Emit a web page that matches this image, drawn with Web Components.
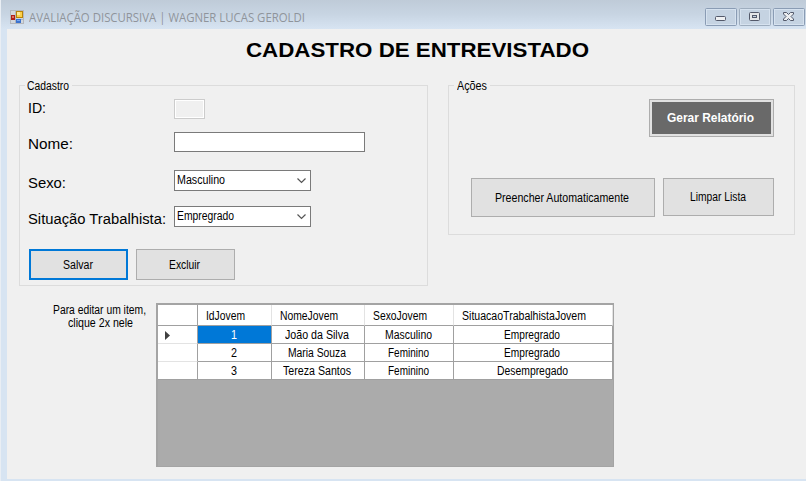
<!DOCTYPE html>
<html lang="pt-BR">
<head>
<meta charset="utf-8">
<title>AVALIAÇÃO DISCURSIVA | WAGNER LUCAS GEROLDI</title>
<style>
html,body{margin:0;height:100%;overflow:hidden}
body{font:12px/13px "Liberation Sans",Arial,sans-serif;color:#000}
</style>
</head>
<body>
<entrevista-app></entrevista-app>
<script>
const define=(name,html,ready)=>customElements.define(name,class extends HTMLElement{
  constructor(){super();this.attachShadow({mode:'open'}).innerHTML=html;}
  connectedCallback(){if(ready)ready.call(this,this.shadowRoot);}
});

// Text run condensed or widened to the pixel width given in "w".
define('fit-text',`<style>
:host{display:block;white-space:nowrap;flex:none}
span{display:inline-block;transform-origin:0 50%}
</style><span><slot></slot></span>`,function(root){
  const w=+this.getAttribute('w'),s=root.querySelector('span');
  this.style.width=w+'px';
  s.style.transform=`scaleX(${w/s.getBoundingClientRect().width})`;
});

define('title-bar',`<style>
:host{display:flex;align-items:flex-start;height:29px;box-sizing:border-box;padding:8px 1px 0 9px;
background:linear-gradient(#bfcbd8,#c8d5e3 50%,#d7e4f2)}
.logo{margin-top:2px;flex:none}
fit-text{margin:1px auto 0 5px;font:12.5px/17px "Open Sans","Noto Sans",sans-serif;color:#8f949b}
.b{display:flex;gap:2px}
.b svg{display:block}
.b rect.f{fill:#c5d3e2;stroke:#8a9cb4}
.b rect.h{fill:none;stroke:#d6e2ef}
</style>
<svg class="logo" width="14" height="14" shape-rendering="crispEdges">
<rect x=".5" y=".5" width="13" height="13" fill="#d2d7dd" stroke="#b4b7bc"/>
<path d="M5.500 1v12M1 9.500h12" stroke="#b4b7bc"/>
<rect x="1" y="5" width="4" height="5" fill="#b02018"/><rect x="2" y="6" width="2" height="2" fill="#e07060"/>
<rect x="6.500" y="1.500" width="6" height="6" fill="#fbd04a" stroke="#b98308"/><rect x="7" y="2" width="3" height="3" fill="#ffe995"/>
<rect x="6" y="9" width="5" height="4" fill="#3b73cf"/><rect x="7" y="10" width="3" height="1" fill="#77a5ee"/></svg>
<fit-text w="276">AVALIAÇÃO DISCURSIVA | WAGNER LUCAS GEROLDI</fit-text>
<div class="b">
<svg width="32" height="18"><rect class="f" x=".5" y=".5" width="31" height="17" rx="1"/><rect class="h" x="1.500" y="1.500" width="29" height="15"/>
<rect x="10.500" y="8.500" width="10" height="4" rx="1" fill="#eef0f2" stroke="#53596a"/></svg>
<svg width="32" height="18"><rect class="f" x=".5" y=".5" width="31" height="17" rx="1" style="stroke:#9eadbe"/><rect class="h" x="1.500" y="1.500" width="29" height="15"/>
<rect x="10.500" y="4.500" width="10" height="8" rx="1" fill="#e4e6e8" stroke="#53596a"/><rect x="13.500" y="7.500" width="4" height="2" fill="#c5d3e2" stroke="#53596a"/></svg>
<svg width="32" height="18"><rect class="f" x=".5" y=".5" width="31" height="17" rx="1"/><rect class="h" x="1.500" y="1.500" width="29" height="15"/>
<path d="M10.500 4.500h3l2 2 2-2h3v1.500l-2.500 2.500 2.500 2.500v1.500h-3l-2-2-2 2h-3v-1.500l2.500-2.500-2.500-2.500z" fill="#eceef0" stroke="#53596a"/></svg>
</div>`);

define('group-box',`<style>
:host{display:block;box-sizing:border-box;border:1px solid #dcdcdc}
.l{display:flex;width:max-content;height:13px;margin:-6px 0 0 5px;padding:0 3px 0 2px;background:#f0f0f0}
</style><div class="l"><slot name="legend"></slot></div><slot></slot>`);

define('form-button',`<style>
:host{display:flex;align-items:center;justify-content:center;box-sizing:border-box;flex:none;
background:#e1e1e1;border:1px solid #adadad;padding:1px 2px 0 0}
:host([default]){border:2px solid #0078d7}
:host([dark]){background:#696969;color:#fff;font-weight:bold;box-shadow:inset 0 0 0 2px #e1e1e1;padding:0 2px 0 0}
</style><slot></slot>`);

define('text-field',`<style>
:host{display:block;box-sizing:border-box;height:20px;background:#fff;border:1px solid #7a7a7a}
:host([disabled]){background:#f0f0f0;border-color:#ccc;box-shadow:inset 0 0 0 1px #fff}
</style>`);

define('combo-box',`<style>
:host{display:flex;box-sizing:border-box;width:137px;height:21px;background:#fff;border:1px solid #7a7a7a;padding:3px 4px 0 2px;justify-content:space-between}
svg{flex:none;margin-top:4px}
</style><slot></slot><svg width="9" height="6"><path d="M.5.5l4 4 4-4" fill="none" stroke="#555" stroke-width="1.200"/></svg>`);

define('form-row',`<style>
:host{display:grid;grid-template-columns:146px auto;justify-content:start;align-items:start;font-size:15.5px;line-height:17px}
::slotted(:not([slot])){font-size:12px;line-height:13px}
</style><slot name="label"></slot><slot></slot>`);

define('data-grid',`<style>
:host{display:block;box-sizing:border-box;width:458px;height:164px;background:#ababab;border:1px solid #a4a4a4;border-width:2px 1px 1px 2px}
.r{display:grid;grid-template-columns:40px 74px 93px 89px 159px;height:18px}
.r>*{box-sizing:border-box;display:flex;align-items:center;justify-content:center;background:#fff;border:solid #a0a0a0;border-width:0 1px 1px 0;padding:2px 2px 0 0}
.r>:first-child{border-bottom-color:#e3e3e3}
.r.last>:first-child{border-bottom-color:#a0a0a0}
.r.h{height:21px}
.r.h>*{justify-content:flex-start;padding:2px 0 0 8px;border-right-color:#e3e3e3}
.r.h>:first-child{border-color:#a0a0a0}
.sel{background:#0078d7!important;color:#fff}
.r:not(.h)>:first-child{justify-content:flex-start;padding-left:7px}
</style><div id="t"></div>`,function(root){
  const rows=[
    [['IdJovem',39],['NomeJovem',58],['SexoJovem',54],['SituacaoTrabalhistaJovem',124]],
    [['1',6],['João da Silva',64],['Masculino',47],['Empregrado',56]],
    [['2',6],['Maria Souza',58],['Feminino',41],['Empregrado',56]],
    [['3',6],['Tereza Santos',68],['Feminino',41],['Desempregado',71]]];
  root.getElementById('t').innerHTML=rows.map((r,i)=>`<div class="r ${i==0?'h':i==3?'last':''}"><div>${i==1?'<svg width="5" height="9"><path d="M0 0l5 4.500L0 9z" fill="#404040"/></svg>':''}</div>${
    r.map(([t,w],j)=>`<div class="${i==1&&j==0?'sel':''}"><fit-text w="${w}">${t}</fit-text></div>`).join('')}</div>`).join('');
});

define('entrevista-app',`<style>
:host{display:flex;flex-direction:column;width:806px;height:481px;box-sizing:border-box;background:#d7e4f2;border-left:1px solid #e9eef4}
main{margin:0 0 2px 6px;flex:1;background:#f0f0f0;display:flex;flex-direction:column}
h1{margin:0;padding:9px 0 0 239px;font:bold 20.5px/24px "Liberation Sans",Arial,sans-serif;height:56px;box-sizing:border-box}
.groups{display:flex;gap:20px;padding-left:12px;align-items:flex-start;height:218px}
.cad{width:409px;height:201px}
.ac{width:347px;height:150px}
.rows{padding:6px 0 0 8px}
.rows form-row:nth-child(1){height:33px}
.rows form-row:nth-child(2){height:38px}
.rows form-row:nth-child(3){height:36px}
.rows form-row:nth-child(4){height:43px}
.rows fit-text[slot]{margin-top:0}
.rows form-row:nth-child(n+2) fit-text[slot]{margin-top:3px}
.rows form-row:nth-child(n+3) fit-text[slot]{margin-top:4px}
.btns{display:flex;gap:8px;padding-left:9px}
.btns form-button{width:99px;height:31px}
.gr{margin:6px 0 41px 200px;width:125px;height:38px}
.a2{display:flex;gap:8px;padding-left:22px;align-items:flex-start}
.bottom{display:flex}
.note{width:149px;box-sizing:border-box;padding:1px 0 0 46px;display:flex;flex-direction:column}
.note fit-text+fit-text{margin-left:15px}
</style>
<title-bar></title-bar>
<main>
<h1><fit-text w="343">CADASTRO DE ENTREVISTADO</fit-text></h1>
<div class="groups">
<group-box class="cad"><fit-text slot="legend" w="42">Cadastro</fit-text>
<div class="rows">
<form-row><fit-text slot="label" w="18">ID:</fit-text><text-field disabled style="width:31px"></text-field></form-row>
<form-row><fit-text slot="label" w="45">Nome:</fit-text><text-field style="width:191px"></text-field></form-row>
<form-row><fit-text slot="label" w="38">Sexo:</fit-text><combo-box><fit-text w="48">Masculino</fit-text></combo-box></form-row>
<form-row><fit-text slot="label" w="138">Situação Trabalhista:</fit-text><combo-box><fit-text w="57">Empregrado</fit-text></combo-box></form-row>
</div>
<div class="btns"><form-button default><fit-text w="30">Salvar</fit-text></form-button><form-button><fit-text w="31">Excluir</fit-text></form-button></div>
</group-box>
<group-box class="ac"><fit-text slot="legend" w="30" style="margin-left:1px">Ações</fit-text>
<form-button dark class="gr"><fit-text w="87" style="font-size:12.5px">Gerar Relatório</fit-text></form-button>
<div class="a2"><form-button style="width:184px;height:39px"><fit-text w="134">Preencher Automaticamente</fit-text></form-button><form-button style="width:111px;height:38px"><fit-text w="56">Limpar Lista</fit-text></form-button></div>
</group-box>
</div>
<div class="bottom"><div class="note"><fit-text w="93">Para editar um item,</fit-text><fit-text w="65">clique 2x nele</fit-text></div><data-grid></data-grid></div>
</main>`);
</script>
</body>
</html>
